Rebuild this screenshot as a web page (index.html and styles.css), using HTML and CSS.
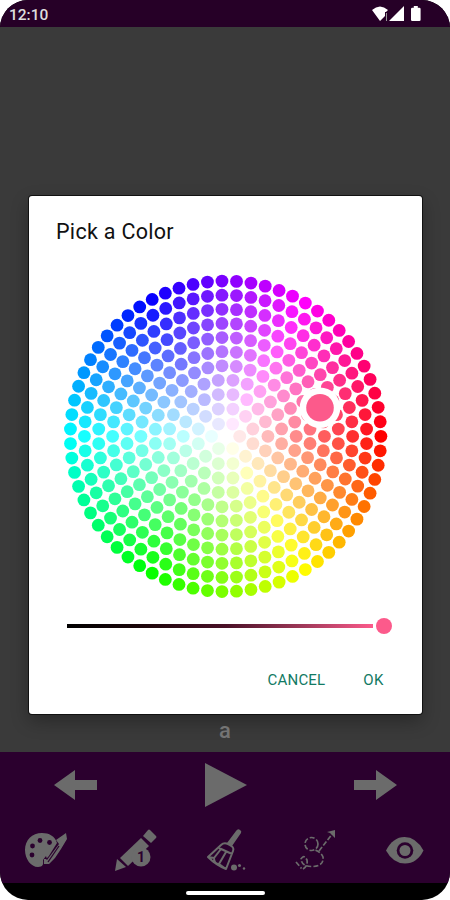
FILE: index.html
```html
<!DOCTYPE html>
<html lang="en">
<head>
    <meta charset="UTF-8">
    <title>Pick a Color</title>
    <link rel="stylesheet" href="styles.css">
    <script>
        // rings of dots, hue follows the angle and saturation the radius
        function drawWheel() {
            const rings = 12;
            const maxRadius = 155.3;
            const size = maxRadius / (rings - 1) / 2;
            let dots = "";

            for (let i = 0; i < rings; i++) {
                const radius = maxRadius * i / (rings - 1);
                let total = 1;
                if (radius > size) {
                    total = Math.max(1, Math.floor(0.975 * Math.PI / Math.asin(size / radius) + 0.5));
                }
                for (let j = 0; j < total; j++) {
                    const angle = Math.PI * 2 * j / total + (Math.PI / total) * ((i + 1) % 2);
                    const x = 161.6 + radius * Math.cos(angle);
                    const y = 162.3 + radius * Math.sin(angle);
                    const hue = angle * 180 / Math.PI;
                    const light = 100 - 50 * radius / maxRadius;
                    dots += `<circle cx="${x.toFixed(2)}" cy="${y.toFixed(2)}" r="6.4" fill="hsl(${hue.toFixed(1)}, 100%, ${light.toFixed(1)}%)"/>`;
                }
            }
            document.getElementById("dots").innerHTML = dots;
        }
    </script>
</head>
<body onload="drawWheel()">
    <div class="phone">
        <div class="status-bar">
            <span>12:10</span>
            <svg class="status-icons" viewBox="0 0 50 17" width="50" height="17">
                <path d="M1 4 Q9 -3 17 4 L15 6 H14 V10 L9 15 Z"/>
                <path d="M15.500 7 V15" stroke="#999"/>
                <path d="M18 15 L33 0 V15 Z"/>
                <path d="M40 3 q0 -1.300 1.300 -1.300 h1.500 v-1.700 h4 v1.700 h1.500 q1.300 0 1.300 1.300 v10.700 q0 1.300 -1.300 1.300 h-7 q-1.300 0 -1.300 -1.300 Z"/>
            </svg>
        </div>

        <div class="screen">
            <div class="dialog">
                <h1>Pick a Color</h1>
                <svg class="wheel" viewBox="0 0 324 324" width="324" height="324">
                    <g id="dots"></g>
                    <circle cx="256" cy="133.700" r="20.300" fill="#fff"/>
                    <circle cx="256" cy="133.700" r="13.800" fill="#fc5a8b"/>
                </svg>
                <div class="slider">
                    <div class="track"></div>
                    <div class="thumb"></div>
                </div>
                <div class="buttons">
                    <button>CANCEL</button>
                    <button>OK</button>
                </div>
            </div>
            <div class="letter">a</div>
        </div>

        <div class="toolbar">
            <div class="row controls">
                <svg viewBox="0 0 43 30" width="43" height="30"><path d="M0 15 L21 0 V10 H43 V20 H21 V30 Z"/></svg>
                <svg viewBox="0 0 42 44" width="42" height="44"><path d="M0 0 L42 22 L0 44 Z"/></svg>
                <svg viewBox="0 0 43 30" width="43" height="30"><path d="M43 15 L22 0 V10 H0 V20 H22 V30 Z"/></svg>
            </div>
            <div class="row tools">
                <svg viewBox="0 0 44 44" width="44" height="44">
                    <path d="M19 5 C9 5 2 12 2 22 C2 31 8 39 15 39 C20 39 20 36 21 33 C25 28 36 23 34 15 C32 8 26 5 19 5 Z"/>
                    <path class="cut" d="M20.500 39 L20 32 L23 28 L24 31 L34 15 L36 16 L25 33 Z"/>
                    <path d="M21 36 L21 31 L23 31 L24 32 L36 16 L33 12 L43 5 L44 11 L38 21 L32 30 L26 36 Z"/>
                    <path class="cut-line" d="M25 34 L36 18"/>
                    <g class="cut"><circle cx="9" cy="27" r="2.400"/><circle cx="9.500" cy="18" r="2.400"/><circle cx="17" cy="12.500" r="2.400"/><circle cx="26.500" cy="14.500" r="2.400"/></g>
                </svg>
                <svg viewBox="0 0 44 44" width="44" height="44">
                    <path d="M30 8 L35 2 Q36 1 37 2 L43 8 Q44 9 43 10 L38 15 Z"/>
                    <path d="M28 10 L36 18 L15 38 L7 30 Z"/>
                    <path d="M4 31 L13 39 L2 43 Z"/>
                    <circle cx="28" cy="29" r="9.500"/>
                    <text x="28" y="34">1</text>
                </svg>
                <svg viewBox="0 0 44 44" width="44" height="44">
                    <path d="M33 3 Q35 0 37 2 Q39 3 38 5 L29 18 L24 15 Z"/>
                    <path class="broom" d="M18 17 Q21 14 25 16 Q32 19 30 23 L23 41 Q13 37 5 29 Z M16 20 L29 26 M5 29 L11 30 L18 21 M11 30 Q11 36 16 36 L23 24 M16 36 L23 41"/>
                    <circle cx="31" cy="39.500" r="3"/><circle cx="36.500" cy="37.500" r="1.500"/><circle cx="41" cy="40.500" r="1.200"/>
                </svg>
                <svg viewBox="0 0 44 44" width="44" height="44">
                    <path class="dash" d="M3 34 L8.500 40.500"/>
                    <path class="dash" d="M10 41 Q15 38 14 32 Q11 26 8 31 Q9 39 20 38.500 Q31 38 30 29 Q28 24 22 22"/>
                    <circle class="dash" cx="18.500" cy="16" r="6.500"/>
                    <path class="dash" d="M26 23 L40 5"/>
                    <path d="M34 4 L42 2 L42 10 L39 7 L37 5 Z"/>
                </svg>
                <svg viewBox="0 0 44 44" width="44" height="44">
                    <path d="M3 22.500 Q10 9 21.500 9 T40.500 22.500 Q34 35.500 22 35.500 T3 22.500 Z"/>
                    <circle class="cut" cx="22" cy="22.500" r="8.300"/>
                    <circle cx="22" cy="22.500" r="5.500"/>
                </svg>
            </div>
        </div>
        <div class="nav-bar"><div class="handle"></div></div>
    </div>
</body>
</html>
```

FILE: styles.css
```css
body {
    margin: 0;
    background: white;
    font-family: Roboto, sans-serif;
}

.phone {
    width: 450px;
    height: 900px;
    display: flex;
    flex-direction: column;
    overflow: hidden;
    border-radius: 28px;
    background: black;
}

.status-bar {
    height: 27px;
    box-sizing: border-box;
    padding: 2px 29px 0 9px;
    display: flex;
    align-items: center;
    justify-content: space-between;
    background: #260027;
    color: #ddd;
    font-size: 15.5px;
    font-weight: 500;
}

.status-icons {
    fill: white;
}

.screen {
    height: 725px;
    display: flex;
    flex-direction: column;
    align-items: center;
    background: #3a3a3a;
}

.dialog {
    width: 393px;
    height: 518px;
    margin-top: 169px;
    box-sizing: border-box;
    flex-shrink: 0;
    border-radius: 3px;
    background: white;
    box-shadow: 0 0 0 1px #111, 0 7px 18px rgba(0, 0, 0, 0.3);
}

h1 {
    margin: 23px 0 0 27.5px;
    font-size: 21.5px;
    font-weight: 400;
    line-height: 26px;
    letter-spacing: 0.3px;
    color: #111;
}

.wheel {
    display: block;
    margin: 29px 0 0 35px;
}

.slider {
    height: 18px;
    margin: 19px 30px 0 38px;
    display: flex;
    align-items: center;
    justify-content: space-between;
}

.track {
    width: 306px;
    height: 4px;
    background: linear-gradient(to right, black, #1c0509 25%, #4a1027 52%, #a33a5b 78%, #fc5a8b);
}

.thumb {
    width: 16px;
    height: 16px;
    border-radius: 50%;
    background: #fc5a8b;
}

.buttons {
    display: flex;
    justify-content: flex-end;
    gap: 38px;
    margin: 35px 38px 0 0;
}

button {
    padding: 0;
    border: none;
    background: none;
    color: #127a63;
    font-family: Roboto, sans-serif;
    font-size: 15px;
    line-height: 20px;
    letter-spacing: 0.2px;
}

.letter {
    margin-top: 4px;
    font-size: 22px;
    line-height: 26px;
    font-weight: 500;
    color: #747474;
}

.toolbar {
    height: 131px;
    background: #2b002e;
    fill: #6b6b6b;
}

.row {
    display: flex;
    align-items: center;
    justify-content: space-between;
}

.controls {
    height: 65px;
    padding: 0 53px 0 54px;
}

.tools {
    height: 66px;
    padding: 0 23px;
}

.cut {
    fill: #2b002e;
}

.cut-line {
    fill: none;
    stroke: #2b002e;
    stroke-width: 1.3;
}

.broom, .dash {
    fill: none;
    stroke: #6b6b6b;
    stroke-width: 2;
    stroke-linejoin: round;
}

.dash {
    stroke-width: 1.7;
    stroke-dasharray: 5 2;
}

.tools text {
    fill: #2b002e;
    font-size: 14px;
    font-weight: 700;
    text-anchor: middle;
}

.nav-bar {
    height: 17px;
    display: flex;
    align-items: center;
    justify-content: center;
}

.handle {
    width: 79px;
    height: 4px;
    margin-top: 3px;
    border-radius: 2px;
    background: white;
}
```
